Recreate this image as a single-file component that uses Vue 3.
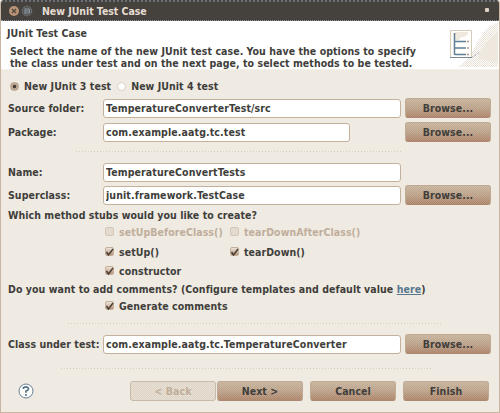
<script setup>
import { ref } from 'vue'

const version = ref(3)
const sourceFolder = ref('TemperatureConverterTest/src')
const packageName = ref('com.example.aatg.tc.test')
const className = ref('TemperatureConvertTests')
const superclass = ref('junit.framework.TestCase')
const classUnderTest = ref('com.example.aatg.tc.TemperatureConverter')
const stubRows = ref([
  [
    { label: 'setUpBeforeClass()', checked: false, disabled: true },
    { label: 'tearDownAfterClass()', checked: false, disabled: true },
  ],
  [
    { label: 'setUp()', checked: true },
    { label: 'tearDown()', checked: true },
  ],
  [{ label: 'constructor', checked: true }],
])
const comments = ref(true)
</script>

<template>
  <main class="dialog">
    <header class="titlebar">
      <svg class="controls" width="26" height="14" viewBox="0 0 26 14">
        <circle cx="6" cy="7" r="5" fill="#b99477" />
        <path d="M4 5l4 4M8 5l-4 4" stroke="#514840" stroke-width="1.3" />
        <circle cx="19" cy="7" r="4.8" fill="#57544f" stroke="#77818a" stroke-dasharray="2 1" />
        <path d="M17 4.500v5.500M17 5h4.500v4H17M17 7h4" fill="none" stroke="#8795a2" stroke-width="1" />
      </svg>
      <h1>New JUnit Test Case</h1>
      <i class="menu-dot"></i>
    </header>

    <section class="banner">
      <div class="banner-copy">
        <h2>JUnit Test Case</h2>
        <p>Select the name of the new JUnit test case. You have the options to specify<br />the class under test and on the next page, to select methods to be tested.</p>
      </div>
      <svg class="banner-art" width="54" height="48" viewBox="0 0 54 48">
        <defs>
          <pattern id="grain" width="2" height="2" patternUnits="userSpaceOnUse">
            <path d="M0 0h1v1H0zM1 1h1v1H1z" fill="#e9e0d5" />
          </pattern>
        </defs>
        <path d="M53 1Q39 7 31 24Q24 38 13 46H53Z" fill="url(#grain)" />
        <path d="M53 10Q43 18 38 27L32 37L53 42Z" fill="#eee8df" />
        <path d="M5.500 9.500h21v27h-21z" fill="#fffdfa" stroke="#d5cbbb" />
        <path d="M10 11h13v2l-4 3h-3l-2 3h-4z" fill="#eee8df" />
        <path d="M5 36.500h22" stroke="#77899a" />
        <path d="M9.500 12v22M10 20.500h11M10 27h11M10 33.500h11" fill="none" stroke="#5e8099" stroke-width="1.500" />
        <path d="M22 20.500h2M22 27h2M22 33.500h2" stroke="#a59888" stroke-width="1.500" />
        <path d="M27 36l4-2M30 34l5-3" stroke="#9caeb9" stroke-dasharray="1 1" />
      </svg>
    </section>

    <form @submit.prevent>
      <div class="versions">
        <label v-for="n in [3, 4]" :key="n" class="choice">
          <input v-model="version" type="radio" :value="n" />
          <span>New JUnit {{ n }} test</span>
        </label>
      </div>

      <div class="field">
        <label>Source folder:</label>
        <input v-model="sourceFolder" class="text" />
        <button>Browse...</button>
      </div>
      <div class="field package">
        <label>Package:</label>
        <input v-model="packageName" class="text short" />
        <button>Browse...</button>
      </div>
      <hr class="rule rule-a" />
      <div class="field name">
        <label>Name:</label>
        <input v-model="className" class="text" />
      </div>
      <div class="field super">
        <label>Superclass:</label>
        <input v-model="superclass" class="text" />
        <button>Browse...</button>
      </div>

      <p class="which">Which method stubs would you like to create?</p>
      <div v-for="(row, i) in stubRows" :key="i" class="stubs">
        <label v-for="stub in row" :key="stub.label" class="check" :class="{ disabled: stub.disabled }">
          <input v-model="stub.checked" type="checkbox" :disabled="stub.disabled" />
          <span>{{ stub.label }}</span>
          <svg v-if="stub.checked" viewBox="0 0 9 9"><path d="M1.500 4l2 3L8 1" /></svg>
        </label>
      </div>
      <p class="config">Do you want to add comments? (Configure templates and default value <a href="#">here</a>)</p>
      <div class="stubs comments">
        <label class="check">
          <input v-model="comments" type="checkbox" />
          <span>Generate comments</span>
          <svg v-if="comments" viewBox="0 0 9 9"><path d="M1.500 4l2 3L8 1" /></svg>
        </label>
      </div>
      <hr class="rule rule-b" />
      <div class="field tested">
        <label>Class under test:</label>
        <input v-model="classUnderTest" class="text" />
        <button>Browse...</button>
      </div>
      <hr class="rule rule-c" />
      <footer>
        <svg class="help" width="16" height="16" viewBox="0 0 16 16">
          <circle cx="8" cy="8" r="7" fill="#fcfbf7" stroke="#668097" />
          <path d="M5.500 6V4.800Q8 3 10 4.700Q11.500 7 8 8V9.700" fill="none" stroke="#55758d" stroke-width="1.700" />
          <path d="M7 11.200h2v1.500H7z" fill="#55758d" />
        </svg>
        <button disabled>&lt; Back</button>
        <button class="next">Next &gt;</button>
        <button class="cancel">Cancel</button>
        <button class="finish">Finish</button>
      </footer>
    </form>
  </main>
</template>

<style>
html, body { margin: 0; background: #efeae2; overflow: hidden; }
</style>

<style scoped>
* { box-sizing: border-box; }
.dialog { width: 500px; height: 413px; border: 1px solid #c8b5a4; border-top: 0; background: #efeae2; color: #403e3b; font: bold 10.5px/12px "DejaVu Sans Condensed", "DejaVu Sans", sans-serif; font-stretch: condensed; letter-spacing: .06px; overflow: hidden; white-space: nowrap; border-radius: 4px 4px 0 0; }
h1, h2, p { margin: 0; font: inherit; }
.titlebar { height: 21px; display: flex; align-items: center; padding: 0 10px 0 7px; background: #45413d; border-top: 2px dotted #6b7078; border-bottom: 1px dotted #8a939b; color: #e5ddd2; }
.controls { flex: none; }
h1 { margin-left: 8px; letter-spacing: -.04px; }
.menu-dot { width: 4px; height: 4px; margin: 0 0 2px auto; background: #ded1c4; border-radius: 1px; }
.banner { height: 49px; display: flex; background: #fff; border-bottom: 1px solid #f3efe9; }
.banner-copy { padding: 6px 0 0 6px; }
.banner-copy p { padding: 6px 0 0 3px; }
.banner-art { margin: 0 0 0 auto; flex: none; }
form { padding: 0 7px; }
.versions { height: 28px; display: flex; padding: 10px 0 0 2px; align-items: flex-start; gap: 6px; }
.choice { display: flex; align-items: center; gap: 5px; }
.choice input { appearance: none; width: 9px; height: 9px; margin: 0; border: 1px solid #d9cec2; border-radius: 50%; background: white; }
.choice input:checked { border-color: #b29c87; background: radial-gradient(circle, #49413b 0 1.600px, #c5ac97 2.200px 5px); }
.field { height: 20px; display: grid; grid-template-columns: 95px 298px 87px; align-items: center; }
.field button { margin-left: 4px; width: 86px; }
.text { appearance: none; width: 298px; height: 19px; min-width: 0; border: 1px solid #c3b19c; border-radius: 3px; outline: 0; padding: 0 2px; color: inherit; background: #fff; font: inherit; letter-spacing: .11px; }
.short { width: 247px; }
button { height: 20px; width: 86px; padding: 0; border: 1px solid #c1aa93; border-bottom-color: #ab8a71; border-radius: 3px; color: #403e3b; background: repeating-conic-gradient(rgba(226,210,190,.18) 0 25%, rgba(145,104,75,.1) 0 50%) 0 0/2px 2px, linear-gradient(#c9b9a3, #bea58e 50%, #ad856b); font: inherit; letter-spacing: inherit; }
.package { margin-top: 4px; }
.rule { height: 1px; border: 0; margin: 0; background: repeating-linear-gradient(90deg, #d8cdbb 0 1px, transparent 1px 3px); }
.rule-a { width: 326px; margin: 9px 0 0 68px; }
.name { margin-top: 10px; }
.super { margin-top: 3px; }
.which { margin-top: 4px; }
.stubs { display: grid; grid-template-columns: 125px 150px; padding-left: 97px; height: 19px; align-items: center; }
.which + .stubs { height: 21px; }
.check { display: flex; align-items: center; gap: 5px; position: relative; }
.check input { appearance: none; flex: none; width: 9px; height: 9px; border: 1px solid #c4af9b; border-radius: 2px; margin: 0; background: linear-gradient(#ede4d9, #b9937b); }
.check svg { position: absolute; width: 9px; height: 9px; left: 0; top: 2px; }
.check path { fill: none; stroke: #4b4036; stroke-width: 1.500; }
.disabled { color: #bfae9b; }
.disabled input { background: #e5dace; border-color: #d4c7b9; }
.config { margin-top: 3px; }
a { color: #587890; }
.comments { margin-top: 1px; }
.rule-b { width: 374px; margin: 8px 0 0 60px; }
.tested { margin-top: 10px; }
.rule-c { width: 370px; margin: 14px 0 0 53px; }
footer { display: flex; align-items: center; padding: 12px 0 0 10px; }
.help { margin-right: 96px; flex: none; }
button:disabled { color: #bfae9b; border-color: #c9bba9; background: repeating-conic-gradient(#ede5d980 0 25%, #d6cabb80 0 50%) 0 0/2px 2px, #e5dcd0; }
.next { margin-left: 1px; }
.cancel, .finish { margin-left: 7px; }
</style>
